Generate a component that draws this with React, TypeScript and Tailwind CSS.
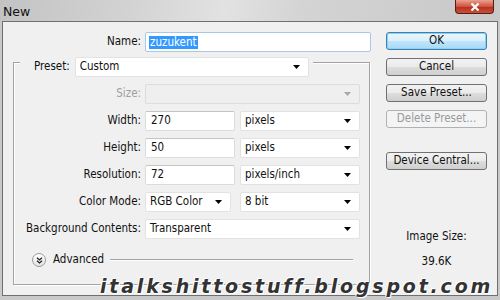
import React from "react";

const Arrow = ({ disabled = false }: { disabled?: boolean }) => (
  <svg width="7" height="4" viewBox="0 0 7 4" className="shrink-0">
    <path d="M0 0 L7 0 L3.5 4 Z" fill={disabled ? "#a8a8a8" : "#000"} />
  </svg>
);

const Select = ({ text, w, disabled = false }: { text: string; w: string; disabled?: boolean }) => (
  <div
    className={`${w} h-[20px] flex items-center justify-between pl-[4px] pr-[8px] rounded-[2px] border ${
      disabled ? "bg-[#efefef] border-[#dcdcdc]" : "bg-white border-[#e2e2e2]"
    }`}
  >
    <span>{text}</span>
    <Arrow disabled={disabled} />
  </div>
);

const Input = ({ text, w }: { text: string; w: string }) => (
  <div className={`${w} h-[20px] flex items-center pl-[5px] bg-white border border-[#dcdcdc] border-t-[#c4c4c4] rounded-[2px]`}>
    {text}
  </div>
);

const Row = ({ label, children, disabled = false }: { label: string; children: React.ReactNode; disabled?: boolean }) => (
  <div className="flex items-center h-[20px]">
    <div className={`w-[127px] text-right whitespace-nowrap ${disabled ? "text-[#a0a0a0]" : ""}`}>{label}</div>
    <div className="ml-[4px] flex items-center gap-[5px]">{children}</div>
  </div>
);

const Btn = ({ text, primary = false, disabled = false }: { text: string; primary?: boolean; disabled?: boolean }) => (
  <div
    className={`w-[101px] h-[18px] flex items-center justify-center rounded-[3px] border ${
      primary
        ? "border-[#3c7fb1] bg-[linear-gradient(#eaf6fd,#d9f0fc_50%,#bee6fd_51%,#a7d9f5)] shadow-[inset_0_0_0_1px_#8fd0f0]"
        : disabled
        ? "border-[#adb2b5] bg-[#f4f4f4] text-[#9a9a9a]"
        : "border-[#707070] bg-[linear-gradient(#f2f2f2,#ebebeb_50%,#dddddd_51%,#cfcfcf)]"
    }`}
  >
    {text}
  </div>
);

export default function App() {
  return (
    <div
      className="w-[500px] h-[300px] relative overflow-hidden flex flex-col bg-[#c9c9c9] text-[#111] text-[11.5px]"
      style={{ fontFamily: '"DejaVu Sans Condensed", "DejaVu Sans", sans-serif', fontStretch: "condensed" }}
    >
      {/* title bar */}
      <div className="h-[21px] shrink-0 flex justify-between bg-[linear-gradient(100deg,#c3c3c3_0%,#d2d2d2_25%,#e2e2e2_45%,#d4d4d4_60%,#c8c8c8_100%)]">
        <span className="pl-[3px] pt-[3px] text-[12.5px]" style={{ fontFamily: '"DejaVu Sans", sans-serif', fontStretch: "normal" }}>
          New
        </span>
        <div className="mr-[6px] w-[39px] h-[14px] rounded-b-[4px] border border-t-0 border-[#5e1a12] bg-[linear-gradient(#e9a190,#d0533f_50%,#b8301c_55%,#c4523c)] flex items-center justify-center">
          <svg width="10" height="8" viewBox="0 0 10 8">
            <path d="M1.5 0.5 L8.5 7.5 M8.5 0.5 L1.5 7.5" stroke="#fff" strokeWidth="2.2" />
          </svg>
        </div>
      </div>

      {/* client */}
      <div className="mx-[2px] mb-[4px] flex-1 border border-[#6f6f6f] bg-[#f0f0f0] flex">
        {/* left column */}
        <div className="w-[383px] flex flex-col pt-[10px]">
          <div className="flex items-center h-[20px]">
            <div className="w-[138px] text-right">Name:</div>
            <div className="ml-[4px] w-[226px] h-[20px] flex items-center pl-[3px] bg-white border border-[#a9c7e6] rounded-[2px]">
              <span className="bg-[#3399ff] text-white px-[1px] leading-[13px]">zuzukent</span>
            </div>
          </div>

          {/* group */}
          <div className="ml-[10px] mt-[10px] w-[357px] border border-[#a3a3a3] shadow-[inset_1px_1px_0_#ffffff,1px_1px_0_#ffffff] pb-[16px] flex flex-col">
            <div className="-mt-[6px] ml-[6px] w-[293px] bg-[#f0f0f0] flex items-center pl-[14px]">
              <span>Preset:</span>
              <div className="ml-[5px]">
                <Select text="Custom" w="w-[234px]" />
              </div>
            </div>
            <div className="flex flex-col gap-[7px] mt-[7px]">
              <Row label="Size:" disabled>
                <Select text="" w="w-[215px]" disabled />
              </Row>
              <Row label="Width:">
                <Input text="270" w="w-[90px]" />
                <Select text="pixels" w="w-[120px]" />
              </Row>
              <Row label="Height:">
                <Input text="50" w="w-[90px]" />
                <Select text="pixels" w="w-[120px]" />
              </Row>
              <Row label="Resolution:">
                <Input text="72" w="w-[90px]" />
                <Select text="pixels/inch" w="w-[120px]" />
              </Row>
              <Row label="Color Mode:">
                <Select text="RGB Color" w="w-[86px]" />
                <div className="ml-[4px]">
                  <Select text="8 bit" w="w-[120px]" />
                </div>
              </Row>
              <Row label="Background Contents:">
                <Select text="Transparent" w="w-[215px]" />
              </Row>
            </div>
            <div className="mt-[13px] flex items-center pl-[18px] pr-[16px] h-[16px]">
              <div className="w-[14px] h-[14px] rounded-full border border-[#9a9a9a] bg-[linear-gradient(#ffffff,#e4e4e4)] flex items-center justify-center">
                <svg width="7" height="7" viewBox="0 0 7 7">
                  <path d="M1 0.8 L3.5 3 L6 0.8 M1 3.8 L3.5 6 L6 3.8" stroke="#222" strokeWidth="1.3" fill="none" />
                </svg>
              </div>
              <span className="ml-[7px]">Advanced</span>
              <div className="ml-[6px] flex-1 h-[2px] border-t border-[#a3a3a3] border-b border-b-white" />
            </div>
          </div>
        </div>

        {/* right column */}
        <div className="w-[101px] flex flex-col pt-[10px]">
          <div className="flex flex-col gap-[8px]">
            <Btn text="OK" primary />
            <Btn text="Cancel" />
            <Btn text="Save Preset..." />
            <Btn text="Delete Preset..." disabled />
          </div>
          <div className="mt-[24px]">
            <Btn text="Device Central..." />
          </div>
          <div className="mt-[58px] text-center">Image Size:</div>
          <div className="mt-[8px] text-center">39.6K</div>
        </div>
      </div>

      {/* watermark */}
      <div
        className="absolute left-[100px] top-[272px] text-[19px] font-bold italic tracking-[2.8px] text-[#333]"
        style={{
          fontFamily: '"DejaVu Sans", sans-serif',
          fontStretch: "normal",
          textShadow: "0 0 2px #fff, 0 0 2px #fff, 1px 1px 0 #fff, -1px -1px 0 #fff",
        }}
      >
        italkshittostuff.blogspot.com
      </div>
    </div>
  );
}
